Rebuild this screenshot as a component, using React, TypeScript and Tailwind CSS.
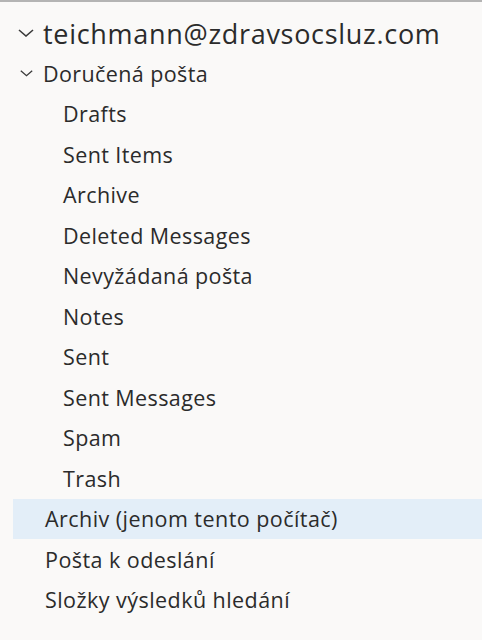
const folders = [
  'Drafts',
  'Sent Items',
  'Archive',
  'Deleted Messages',
  'Nevyžádaná pošta',
  'Notes',
  'Sent',
  'Sent Messages',
  'Spam',
  'Trash',
];

const bottom = ['Archiv (jenom tento počítač)', 'Pošta k odeslání', 'Složky výsledků hledání'];

function Chevron({ size }: { size: number }) {
  return (
    <svg width={size} height={size / 2} viewBox="0 0 16 8" fill="none" stroke="#3a3a3a" strokeWidth={1.6}>
      <path d="M1 1l7 6 7-6" />
    </svg>
  );
}

export default function App() {
  return (
    <div
      className="w-[482px] h-[640px] bg-[#faf9f8] border-t-2 border-[#b4b4b4] text-[#2b2b2b] overflow-hidden"
      style={{ fontFamily: '"Open Sans", "Noto Sans", sans-serif' }}
    >
      <div className="pt-[11px] flex flex-col">
        <div className="h-[40px] flex items-center pl-[18px] gap-[9px]">
          <Chevron size={16} />
          <span className="text-[27px] leading-none tracking-[0.7px]">teichmann@zdravsocsluz.com</span>
        </div>
        <div className="h-[40.5px] flex items-center pl-[20px] gap-[10px]">
          <Chevron size={13} />
          <span className="text-[21.5px] leading-none tracking-[0.4px]">Doručená pošta</span>
        </div>
        {folders.map((f) => (
          <div key={f} className="h-[40.5px] flex items-center pl-[63px]">
            <span className="text-[21.5px] leading-none tracking-[0.4px]">{f}</span>
          </div>
        ))}
        {bottom.map((f, i) => (
          <div
            key={f}
            className={`h-[40.5px] flex items-center pl-[32px] ml-[13px] ${i === 0 ? 'bg-[#e3eef8]' : ''}`}
          >
            <span className="text-[21.5px] leading-none tracking-[0.45px]">{f}</span>
          </div>
        ))}
      </div>
    </div>
  );
}
